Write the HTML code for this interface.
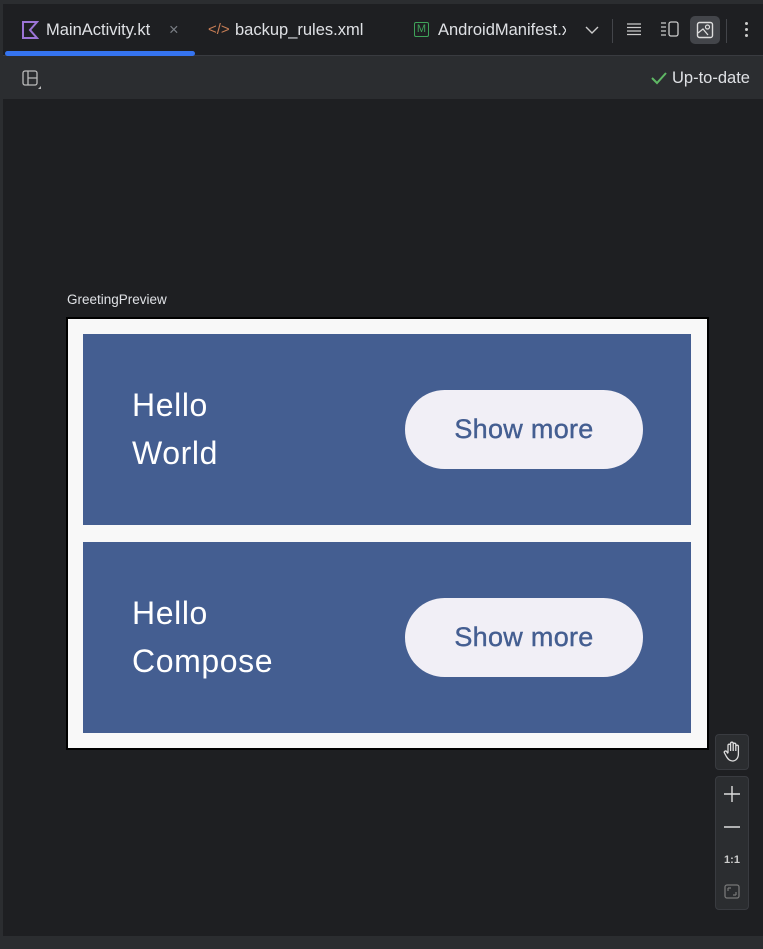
<!DOCTYPE html>
<html><head><style>
*{margin:0;padding:0;box-sizing:border-box}
body{width:763px;height:949px;background:#1e1f22;font-family:"Liberation Sans",sans-serif;position:relative;overflow:hidden;color:#dfe1e5}
.abs{position:absolute}
.tabs{left:0;top:0;width:763px;height:56px;background:#1e1f22;border-top:4px solid #2b2d30;border-bottom:1px solid #393b40}
.tb{left:0;top:56px;width:763px;height:43px;background:#2b2d30}
.t{font-size:16.5px;top:21px}
.card{left:83px;width:608px;height:191px;background:#445e91}
.hello{left:132px;color:#fff;font-size:32px;line-height:48px;letter-spacing:.6px}
.btn{left:405px;width:238px;height:79px;border-radius:40px;background:#f1eff6;color:#445e91;font-size:27px;text-align:center;line-height:79px;letter-spacing:.3px;-webkit-text-stroke:.4px #445e91}
</style></head><body>
<div class="abs tabs"></div>
<div class="abs" style="left:0;top:4px;width:3px;height:932px;background:#2b2d30"></div>
<svg class="abs" style="left:21px;top:21px" width="18" height="18" viewBox="0 0 18 18"><path d="M2 1V17H16L9 9L16 1Z" fill="none" stroke="#9c74d6" stroke-width="2"/></svg>
<div class="abs t" style="left:46px">MainActivity.kt</div>
<div class="abs t" style="left:169px;color:#7a7e85">×</div>
<div class="abs t" style="left:208px;color:#c77d55;font-size:15px">&lt;/&gt;</div>
<div class="abs t" style="left:235px">backup_rules.xml</div>
<div class="abs" style="left:5px;top:51px;width:190px;height:5px;border-radius:3px;background:#3574f0"></div>
<div class="abs" style="left:414px;top:22px;width:15px;height:15px;border:1.5px solid #3fa35a;border-radius:2px;color:#3fa35a;font-size:11px;text-align:center;line-height:12px">M</div>
<div class="abs t" style="left:438px;width:128px;overflow:hidden;white-space:nowrap">AndroidManifest.xml</div>
<svg class="abs" style="left:585px;top:25px" width="14" height="10"><path d="M1 2L7 8L13 2" fill="none" stroke="#ccc" stroke-width="1.4"/></svg>
<div class="abs" style="left:612px;top:19px;width:1px;height:24px;background:#43454a"></div>
<svg class="abs" style="left:627px;top:22px" width="14" height="14"><path d="M0 2H14M0 5.5H14M0 9H14M0 12.5H14" stroke="#ccc" stroke-width="1.3"/></svg>
<svg class="abs" style="left:660px;top:21px" width="20" height="16"><path d="M1 2H6M1 6H6M1 10H6M1 14H6" stroke="#ccc" stroke-width="1.3"/><rect x="9" y="1" width="9" height="14" rx="2" fill="none" stroke="#ccc" stroke-width="1.3"/></svg>
<div class="abs" style="left:690px;top:16px;width:30px;height:28px;border-radius:5px;background:#43454a"></div>
<svg class="abs" style="left:696px;top:21px" width="18" height="18"><rect x="1.5" y="1.5" width="15" height="15" rx="2" fill="none" stroke="#ddd" stroke-width="1.4"/><path d="M2 12L7 8L12 14" fill="none" stroke="#ddd" stroke-width="1.3"/><circle cx="11.5" cy="6" r="2" fill="none" stroke="#ddd" stroke-width="1.2"/></svg>
<div class="abs" style="left:726px;top:19px;width:1px;height:24px;background:#43454a"></div>
<div class="abs" style="left:745px;top:22px;width:3px;height:3px;border-radius:2px;background:#ccc;box-shadow:0 6px 0 #ccc,0 12px 0 #ccc"></div>
<div class="abs tb"></div>
<svg class="abs" style="left:22px;top:70px" width="20" height="20"><rect x="1" y="1" width="14" height="14" rx="2" fill="none" stroke="#bbb" stroke-width="1.3"/><path d="M6 1V15M6 8H15" stroke="#bbb" stroke-width="1.3"/><path d="M19 16V19H16Z" fill="#bbb"/></svg>
<svg class="abs" style="left:651px;top:71px" width="16" height="14"><path d="M1 7L6 12L15 2" fill="none" stroke="#5fb865" stroke-width="2"/></svg>
<div class="abs" style="left:672px;top:69px;font-size:16.5px">Up-to-date</div>
<div class="abs" style="left:67px;top:292px;font-size:13.5px;color:#dfe1e5">GreetingPreview</div>
<div class="abs" style="left:66px;top:317px;width:643px;height:433px;background:#f8f8f8;border:2px solid #000"></div>
<div class="abs card" style="top:334px"></div>
<div class="abs card" style="top:542px"></div>
<div class="abs hello" style="top:381px">Hello<br>World</div>
<div class="abs hello" style="top:589px">Hello<br>Compose</div>
<div class="abs btn" style="top:390px">Show more</div>
<div class="abs btn" style="top:598px">Show more</div>
<div class="abs" style="left:715px;top:734px;width:34px;height:36px;border-radius:4px;background:#2b2d30;border:1px solid #393b40"></div>
<svg class="abs" style="left:722px;top:741px" width="20" height="22" viewBox="0 0 20 22"><path d="M6 12V4.5a1.3 1.3 0 0 1 2.6 0V10M8.6 10V2.5a1.3 1.3 0 0 1 2.6 0V10M11.2 10V3.5a1.3 1.3 0 0 1 2.6 0V10M13.8 10V5.5a1.3 1.3 0 0 1 2.6 0V13c0 4-2.5 7-6 7c-3 0-4.5-2-6-4.5L2.5 12a1.3 1.3 0 0 1 2.2-1.4L6 12.5" fill="none" stroke="#ddd" stroke-width="1.3" stroke-linejoin="round"/></svg>
<div class="abs" style="left:715px;top:776px;width:34px;height:134px;border-radius:4px;background:#2b2d30;border:1px solid #393b40"></div>
<svg class="abs" style="left:722px;top:784px" width="20" height="120"><path d="M10 2V18M2 10H18M2 43H18" stroke="#ddd" stroke-width="1.4"/><text x="10" y="79" font-size="11" font-weight="bold" fill="#ccc" text-anchor="middle" font-family="Liberation Sans">1:1</text><rect x="3" y="101" width="14" height="13" rx="2" fill="none" stroke="#777" stroke-width="1.3"/><path d="M6 104H9M6 104V107M14 111H11M14 111V108" stroke="#777" stroke-width="1.2"/></svg>
<div class="abs" style="left:0;top:936px;width:763px;height:13px;background:#2b2d30"></div>
</body></html>
